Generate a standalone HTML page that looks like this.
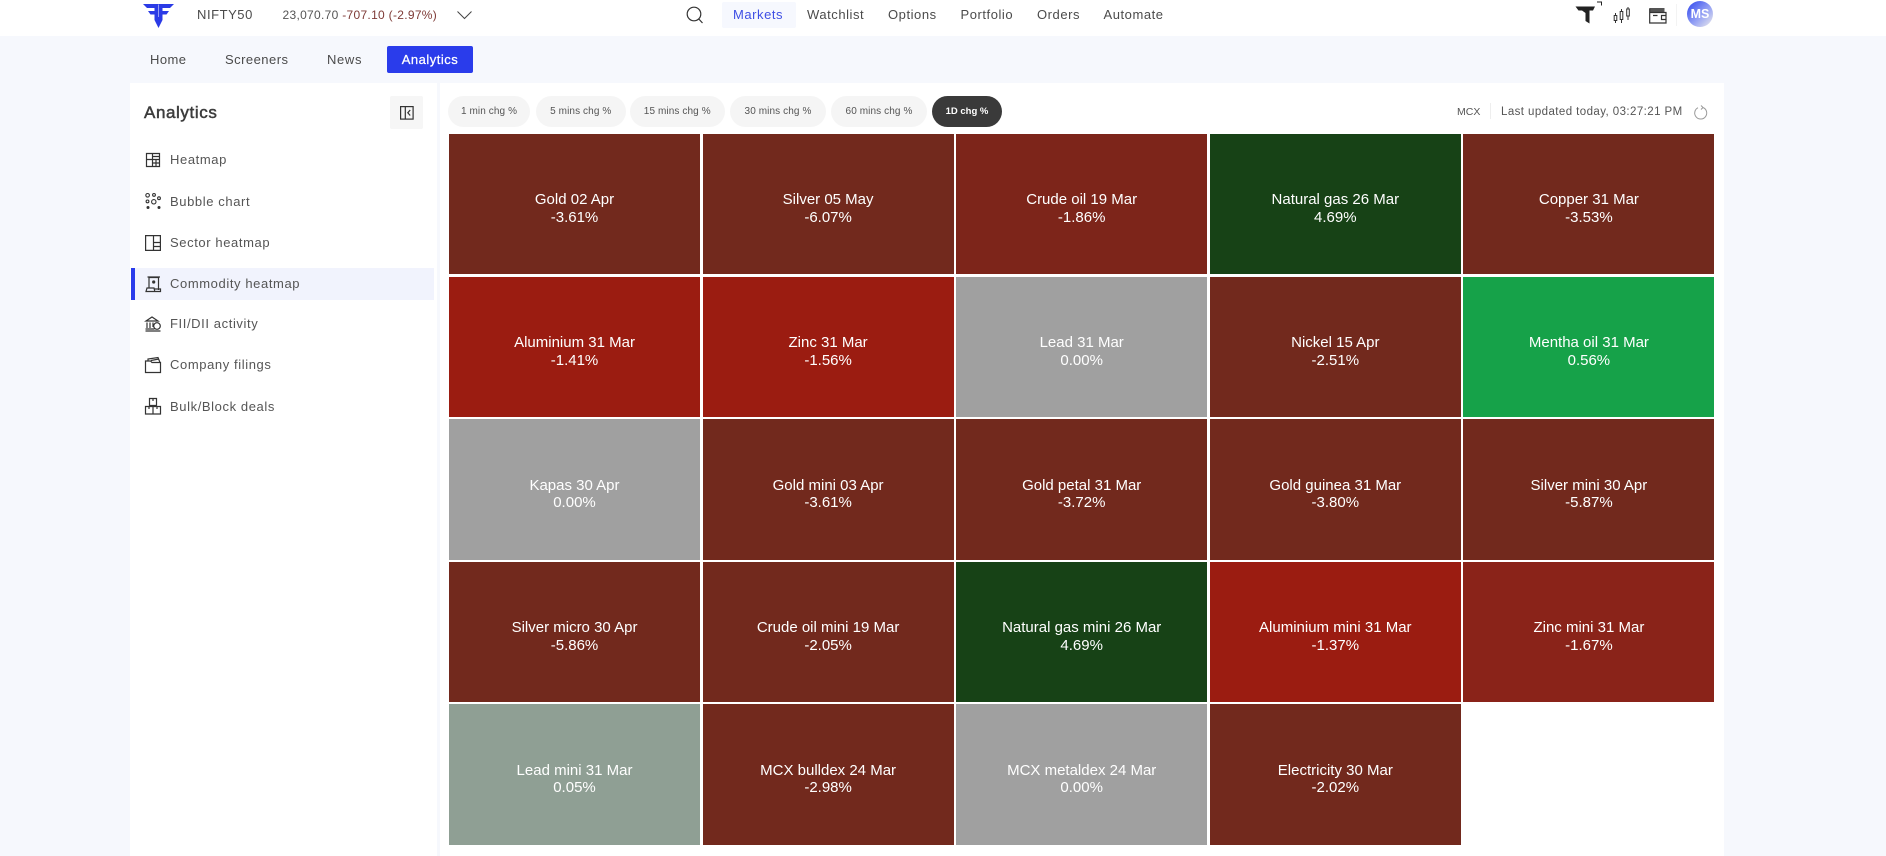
<!DOCTYPE html>
<html lang="en"><head><meta charset="utf-8"><title>Commodity heatmap</title>
<style>
html,body{margin:0;padding:0;width:1886px;height:855px;overflow:hidden;background:#f6f8fd;font-family:"Liberation Sans",Arial,sans-serif;color:#444}
.a{position:absolute}
.t{position:absolute;white-space:nowrap;height:20px;line-height:20px}
.n{font-size:13px;letter-spacing:.55px;color:#4b4b4b}
.s{font-size:13px;letter-spacing:.6px;color:#555;left:170px}
.c{position:absolute;top:96px;height:31px;line-height:31px;border-radius:16px;background:#f5f5f5;color:#555;font-size:10px;letter-spacing:.1px;text-align:center}
.h{position:absolute;width:251px;height:140.4px;color:#fff;font-size:15px;line-height:17.5px;text-align:center;display:flex;flex-direction:column;justify-content:center;padding-top:9.5px;box-sizing:border-box}
svg{position:absolute;overflow:visible}
.i{fill:none;stroke:#333;stroke-width:1.2}
</style></head><body>
<div class="a" style="left:0;top:0;width:1886px;height:36px;background:#fff"></div>
<svg style="left:143px;top:3px" width="31" height="25" viewBox="0 0 31 25"><path fill="#2b3be6" d="M0 1H31L27 5H19.500V8H26L23.500 11.500H19.500V17L15.500 25L11.500 17V11.500H7.500L5 8H11.500V5H4Z"/><path d="M15.500 1.500V14" stroke="#fff" stroke-width=".9" opacity=".55"/></svg>
<div class="t n" style="left:197px;top:5px">NIFTY50</div>
<div class="t" style="left:282.500px;top:5px;font-size:12px;letter-spacing:.3px;color:#555">23,070.70 <span style="color:#7e3a36">-707.10 (-2.97%)</span></div>
<svg style="left:457px;top:11px" width="15" height="8" viewBox="0 0 15 8"><path d="M.500.500 7.500 7.500 14.500.500" fill="none" stroke="#444" stroke-width="1"/></svg>
<svg style="left:686px;top:6px" width="18" height="18" viewBox="0 0 18 18"><circle cx="8" cy="8" r="6.800" fill="none" stroke="#333" stroke-width="1.200"/><path d="M12.800 13 16.500 17" stroke="#333" stroke-width="1.200"/></svg>
<div class="a" style="left:722px;top:2px;width:74px;height:26px;background:#f6f8fe;border-radius:2px"></div>
<div class="t n" style="left:733px;top:5px;color:#3f4fe4">Markets</div>
<div class="t n" style="left:807px;top:5px">Watchlist</div>
<div class="t n" style="left:888px;top:5px">Options</div>
<div class="t n" style="left:960.500px;top:5px">Portfolio</div>
<div class="t n" style="left:1037px;top:5px">Orders</div>
<div class="t n" style="left:1103.500px;top:5px">Automate</div>
<svg style="left:1575px;top:1px" width="28" height="23" viewBox="0 0 28 23"><path fill="#222" d="M.500 5.500H20L18 9.500H14.500V22.500L10.500 20V12L7 9.500H3.500ZM22 .500H27V4.500H26V1.500H22Z"/></svg>
<svg style="left:1613px;top:6px" width="18" height="18" viewBox="0 0 18 18"><path d="M2.500 7v10M8.500 3v14M15 1v13" fill="none" stroke="#333" stroke-width="1"/><g fill="#fff" stroke="#333" stroke-width="1"><rect x="1.200" y="9.500" width="2.600" height="5"/><rect x="7.200" y="5.500" width="2.600" height="8"/><rect x="13.700" y="3" width="2.600" height="7"/></g></svg>
<svg style="left:1649px;top:7px" width="18" height="17" viewBox="0 0 18 17"><path fill="#555" d="M.500 1H15.500V5H.500Z"/><path d="M.700 1.500V16H17V5.500H.700M17 8.500H12.500V12.500H17M4 8.500H8.500" fill="none" stroke="#333" stroke-width="1.200"/></svg>
<div class="a" style="left:1676px;top:4px;width:1px;height:22px;background:#f3f3f3"></div>
<div class="a" style="left:1687px;top:1px;width:26px;height:26px;border-radius:50%;background:linear-gradient(135deg,#3f55f0 15%,#8f9cf4 55%,#e4e4ec 95%);color:#fff;font-size:12.500px;font-weight:bold;line-height:27px;text-align:center;opacity:.95">MS</div>

<div class="t n" style="left:150px;top:49.500px;letter-spacing:.45px">Home</div>
<div class="t n" style="left:225px;top:49.500px;letter-spacing:.47px">Screeners</div>
<div class="t n" style="left:327px;top:49.500px;letter-spacing:.65px">News</div>
<div class="a" style="left:387px;top:46px;width:86px;height:27px;background:#2a3ceb;border-radius:2px;color:#fff;font-size:13px;line-height:27px;text-align:center;letter-spacing:.5px;-webkit-text-stroke:.25px #fff">Analytics</div>

<div class="a" style="left:130px;top:82.500px;width:307px;height:773px;background:#fff"></div>
<div class="a" style="left:440px;top:82.500px;width:1284px;height:773px;background:#fff"></div>

<div class="t" style="left:144px;top:102.500px;font-size:17px;letter-spacing:.6px;color:#3c3c3c;-webkit-text-stroke:.5px #3c3c3c">Analytics</div>
<div class="a" style="left:390px;top:96px;width:32.500px;height:33px;background:#f6f6f6;border-radius:2px"></div>
<svg style="left:400px;top:106px" width="14" height="14" viewBox="0 0 14 14"><g fill="none" stroke="#333" stroke-width="1.200"><rect x=".600" y=".600" width="12.500" height="12.500"/><path d="M5.300.600V13M10.200 4 7.800 6.800 10.200 9.500"/></g></svg>

<svg class="i" style="left:146px;top:153px" width="14" height="14" viewBox="0 0 14 14"><path d="M.500.500h13v13H.500zM.500 6.500h13M6.500.500v13M10 6.500v7M6.500 3.500h7M6.500 10h7"/></svg>
<div class="t s" style="top:149.500px">Heatmap</div>
<svg style="left:145px;top:192.500px" width="16" height="17" viewBox="0 0 16 17"><g fill="none" stroke="#333" stroke-width="1.100"><circle cx="2.600" cy="2.300" r="1.800"/><circle cx="9" cy="1.900" r="1.400"/><circle cx="2.500" cy="8.400" r="1.400"/><circle cx="8.800" cy="8.800" r="2.200"/><circle cx="14" cy="5.200" r="1.400"/></g><g fill="#333"><circle cx="3" cy="14.500" r="1.500"/><circle cx="14" cy="14.500" r="1.500"/></g></svg>
<div class="t s" style="top:191.500px">Bubble chart</div>
<svg class="i" style="left:145px;top:235px" width="16" height="16" viewBox="0 0 16 16"><path d="M.600.600h14.800v14.800H.600zM8.500.600v14.800M8.500 7.500h7M8.500 11.500h7"/></svg>
<div class="t s" style="top:232.700px">Sector heatmap</div>

<div class="a" style="left:131px;top:268px;width:303px;height:32px;background:#f1f3fd"></div>
<div class="a" style="left:131px;top:268px;width:3.500px;height:32px;background:#2a3ceb"></div>
<svg class="i" style="left:145px;top:276px" width="16" height="16" viewBox="0 0 16 16"><path d="M4 12V1.500h9.500V14M2.500 1H15M1 15.500 2 12h7l.8 3.500zM9.800 15.500H15.500V13H9.200"/><circle cx="8.700" cy="6" r="1.600" fill="#333" stroke="none"/></svg>
<div class="t s" style="top:273.500px">Commodity heatmap</div>
<svg class="i" style="left:145px;top:316px" width="16" height="16" viewBox="0 0 16 16" stroke-width="1"><path d="M1 5 7 1l6 4zM2 6.500V12M5 6.500V12M8 6.500V11M.500 13h9M.500 15h15"/><circle cx="12" cy="10" r="3.300"/></svg>
<div class="t s" style="top:314px">FII/DII activity</div>
<svg class="i" style="left:145px;top:357px" width="16" height="16" viewBox="0 0 16 16"><path d="M.500 5.500v10h15V5.500H7L5.500 4H.500zM3 4V2L13 .500l2 5M6 3.500 14 2"/></svg>
<div class="t s" style="top:354.700px">Company filings</div>
<svg class="i" style="left:145px;top:398px" width="16" height="17" viewBox="0 0 16 17"><path d="M4.500.500h7v7h-7zM.500 8.500h7.500v7.500H.500zM8 8.500h7.500v7.500H8zM8 .500v2.500M4 8.500v2.500M12 8.500v2.500"/></svg>
<div class="t s" style="top:396.700px">Bulk/Block deals</div>

<div class="c" style="left:448px;width:82px">1 min chg %</div>
<div class="c" style="left:535.500px;width:90.500px">5 mins chg %</div>
<div class="c" style="left:630px;width:94.500px">15 mins chg %</div>
<div class="c" style="left:730px;width:96px">30 mins chg %</div>
<div class="c" style="left:831px;width:96px">60 mins chg %</div>
<div class="c" style="left:932px;width:70px;background:#3a3a3a;color:#fff;font-weight:bold;font-size:9.500px;letter-spacing:0">1D chg %</div>

<div class="t" style="left:1457px;top:101.500px;font-size:10.500px;color:#555">MCX</div>
<div class="a" style="left:1490px;top:103px;width:1px;height:16px;background:#eee"></div>
<div class="t" style="left:1501px;top:101.500px;font-size:11.500px;letter-spacing:.42px;color:#555">Last updated today, 03:27:21 PM</div>
<svg style="left:1694px;top:105px" width="14" height="15" viewBox="0 0 14 15"><path d="M9 2.500A6 6 0 1 1 4 2.700M7 .500 9 2.500 7 4.500" fill="none" stroke="#999" stroke-width="1"/></svg>

<div class="h" style="left:449px;top:134px;background:#72291d">Gold 02 Apr<br>-3.61%</div>
<div class="h" style="left:702.600px;top:134px;background:#72291d">Silver 05 May<br>-6.07%</div>
<div class="h" style="left:956.200px;top:134px;background:#7d251a">Crude oil 19 Mar<br>-1.86%</div>
<div class="h" style="left:1209.800px;top:134px;background:#174216">Natural gas 26 Mar<br>4.69%</div>
<div class="h" style="left:1463.400px;top:134px;background:#72291d">Copper 31 Mar<br>-3.53%</div>

<div class="h" style="left:449px;top:276.600px;background:#9b1c11">Aluminium 31 Mar<br>-1.41%</div>
<div class="h" style="left:702.600px;top:276.600px;background:#9b1c11">Zinc 31 Mar<br>-1.56%</div>
<div class="h" style="left:956.200px;top:276.600px;background:#a0a0a0">Lead 31 Mar<br>0.00%</div>
<div class="h" style="left:1209.800px;top:276.600px;background:#72291d">Nickel 15 Apr<br>-2.51%</div>
<div class="h" style="left:1463.400px;top:276.600px;background:#16a249">Mentha oil 31 Mar<br>0.56%</div>

<div class="h" style="left:449px;top:419.200px;background:#a0a0a0">Kapas 30 Apr<br>0.00%</div>
<div class="h" style="left:702.600px;top:419.200px;background:#72291d">Gold mini 03 Apr<br>-3.61%</div>
<div class="h" style="left:956.200px;top:419.200px;background:#72291d">Gold petal 31 Mar<br>-3.72%</div>
<div class="h" style="left:1209.800px;top:419.200px;background:#72291d">Gold guinea 31 Mar<br>-3.80%</div>
<div class="h" style="left:1463.400px;top:419.200px;background:#72291d">Silver mini 30 Apr<br>-5.87%</div>

<div class="h" style="left:449px;top:561.800px;background:#72291d">Silver micro 30 Apr<br>-5.86%</div>
<div class="h" style="left:702.600px;top:561.800px;background:#72291d">Crude oil mini 19 Mar<br>-2.05%</div>
<div class="h" style="left:956.200px;top:561.800px;background:#174216">Natural gas mini 26 Mar<br>4.69%</div>
<div class="h" style="left:1209.800px;top:561.800px;background:#9b1c11">Aluminium mini 31 Mar<br>-1.37%</div>
<div class="h" style="left:1463.400px;top:561.800px;background:#8a2319">Zinc mini 31 Mar<br>-1.67%</div>

<div class="h" style="left:449px;top:704.400px;background:#8f9f94">Lead mini 31 Mar<br>0.05%</div>
<div class="h" style="left:702.600px;top:704.400px;background:#72291d">MCX bulldex 24 Mar<br>-2.98%</div>
<div class="h" style="left:956.200px;top:704.400px;background:#a0a0a0">MCX metaldex 24 Mar<br>0.00%</div>
<div class="h" style="left:1209.800px;top:704.400px;background:#72291d">Electricity 30 Mar<br>-2.02%</div>
</body></html>
